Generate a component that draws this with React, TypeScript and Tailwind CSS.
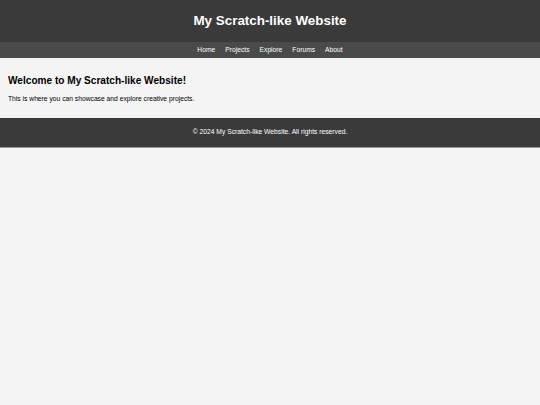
export default function App() {
  return (
    <div className="min-h-screen bg-[#f4f4f4] font-['Liberation_Sans',Arial,sans-serif] text-black">
      <header className="flex h-[42px] items-center justify-center bg-[#3a3a3a] text-white">
        <h1 className="text-[13.4px] font-bold leading-none">My Scratch-like Website</h1>
      </header>
      <nav className="flex h-[16px] items-center justify-center gap-[10px] bg-[#4a4a4a] text-[6.72px] text-white">
        <a href="#">Home</a>
        <a href="#">Projects</a>
        <a href="#">Explore</a>
        <a href="#">Forums</a>
        <a href="#">About</a>
      </nav>
      <main className="h-[60px] px-[8px] pt-[17px]">
        <h2 className="text-[10.1px] font-bold leading-[12px]">Welcome to My Scratch-like Website!</h2>
        <p className="mt-[8px] text-[6.72px] leading-[8px]">This is where you can showcase and explore creative projects.</p>
      </main>
      <footer className="flex h-[30px] items-center justify-center border-b border-[#9a9a9a] bg-[#3a3a3a] text-[6.72px] text-white">
        <p>© 2024 My Scratch-like Website. All rights reserved.</p>
      </footer>
    </div>
  );
}
